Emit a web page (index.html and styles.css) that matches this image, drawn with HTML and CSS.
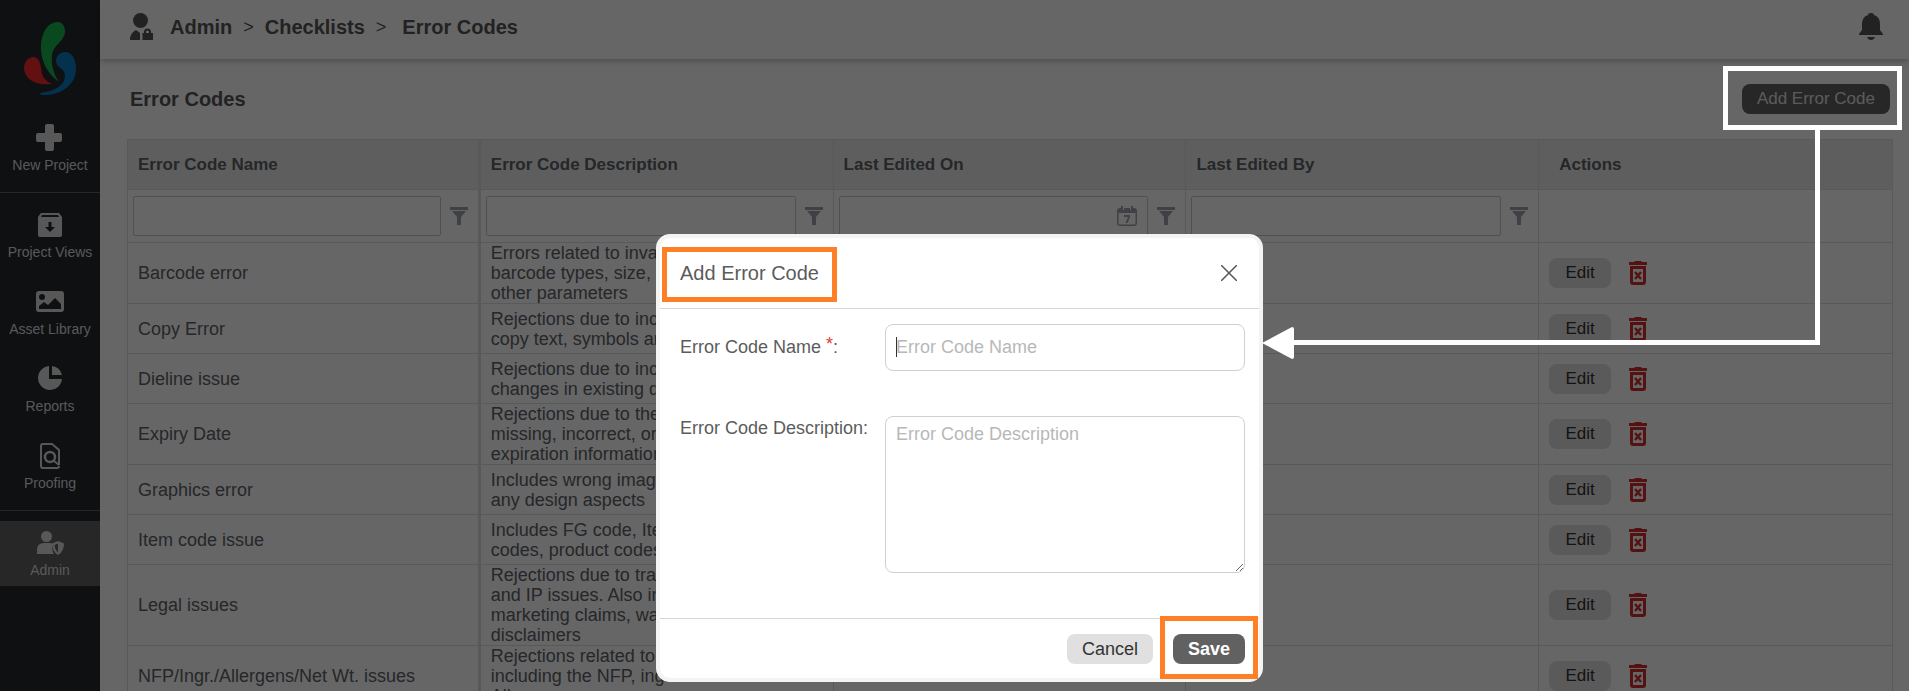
FILE: index.html
```
<!DOCTYPE html>
<html lang="en">
<head>
    <meta charset="UTF-8">
    <title>Error Codes</title>
    <link rel="stylesheet" href="styles.css">
</head>
<body>
<svg class="sprite" aria-hidden="true">
    <symbol id="filter" viewBox="0 0 18 18">
        <path d="M0 0h18v3H0zM2 4h14l-5 6v8H7v-8z"/>
    </symbol>
    <symbol id="trash" viewBox="0 0 18 24">
        <path d="M6 0h6l1 1h5v3H0V1h5zM1 5h16v16a3 3 0 0 1-3 3H4a3 3 0 0 1-3-3zM4 8v13h10V8z" fill-rule="evenodd"/>
        <path d="M6 11l6 7M12 11l-6 7" stroke="currentColor" stroke-width="2.4" fill="none"/>
    </symbol>
</svg>

<div class="page">
    <aside class="sidebar">
        <a class="logo" href="#" aria-label="Home">
            <svg width="52" height="74" viewBox="0 0 52 74">
                <path fill="#19b552" d="M34 0C24 0 17 10 17 26C17 40 24 52 35 60C29 51 27 41 28 34C29 22 41 20 41 9C41 4 38 0 34 0Z"/>
                <path fill="#f5282d" d="M9 35C4 35 0 40 0 46C0 56 10 64 28 62C19 58 18 53 17 46C16 39 14 35 9 35Z"/>
                <path fill="#0a7ac4" d="M41 30C36 30 32 34 32 39C32 46 41 46 41 54C41 62 33 69 16 71L17 73C38 74 52 62 52 47C52 37 48 30 41 30Z"/>
            </svg>
        </a>
        <nav>
            <a class="item" href="#">
                <svg viewBox="0 0 28 28"><path d="M11 1h5a2 2 0 0 1 2 2v7h6a2 2 0 0 1 2 2v5a2 2 0 0 1-2 2h-6v7a2 2 0 0 1-2 2h-5a2 2 0 0 1-2-2v-7H2a2 2 0 0 1-2-2v-5a2 2 0 0 1 2-2h7V3a2 2 0 0 1 2-2z"/></svg>
                New Project
            </a>
            <hr>
            <a class="item" href="#">
                <svg viewBox="0 0 28 28"><path fill-rule="evenodd" d="M5 3h18l3 4v18a2 2 0 0 1-2 2H4a2 2 0 0 1-2-2V7zM6 5L5 7h18l-1-2zM12.500 12v5H9l5 5 5-5h-3.500v-5z"/></svg>
                Project Views
            </a>
            <a class="item" href="#">
                <svg viewBox="0 0 28 28"><path fill-rule="evenodd" d="M3 4h22a3 3 0 0 1 3 3v15a3 3 0 0 1-3 3H3a3 3 0 0 1-3-3V7a3 3 0 0 1 3-3zM6 7a3 3 0 1 0 0 6 3 3 0 0 0 0-6zM3 22h22v-5l-6-6-7 7-4-3-5 4z"/></svg>
                Asset Library
            </a>
            <a class="item" href="#">
                <svg viewBox="0 0 28 28"><path d="M13 2v13h13A12 12 0 1 1 13 2zM16 2a12 12 0 0 1 10 9H16z"/></svg>
                Reports
            </a>
            <a class="item" href="#">
                <svg viewBox="0 0 28 28"><path d="M23 24V9l-7-6H7a2 2 0 0 0-2 2v20a2 2 0 0 0 2 2h14a2 2 0 0 0 2-2M17 19l6 5" fill="none" stroke="currentColor" stroke-width="2"/><circle cx="14" cy="16" r="5" fill="none" stroke="currentColor" stroke-width="2.500"/></svg>
                Proofing
            </a>
            <hr>
            <a class="item active" href="#">
                <svg viewBox="0 0 28 28"><circle cx="10.500" cy="8.500" r="5.500"/><path d="M1 26v-4q0-7 7-7h5q3 0 4 1-2 5 1 10z"/><path fill-rule="evenodd" d="M22 13l6 2.500q0 8-6 11.500-6-3.500-6-11.500zM22 15.500l-3.500 1.500q.5 5 3.500 7.500z"/></svg>
                Admin
            </a>
        </nav>
    </aside>

    <div class="main">
        <header class="topbar">
            <svg class="user-icon" width="24" height="28" viewBox="0 0 24 28">
                <ellipse cx="10.500" cy="7.500" rx="7.500" ry="7.500"/>
                <path d="M0 27q0-7 6-10l4 3v7z"/>
                <path fill-rule="evenodd" d="M12.500 20H14v-1q0-3.500 3.500-3.500T21 19v1h2v7H12.500zM16 20h3v-1q0-1.500-1.500-1.500T16 19z"/>
            </svg>
            <div class="breadcrumb">
                <a href="#">Admin</a><span>&gt;</span><a href="#">Checklists</a><span>&gt;</span><a class="current" href="#">Error Codes</a>
            </div>
            <button class="bell" aria-label="Notifications">
                <svg width="24" height="28" viewBox="0 0 24 28"><path d="M9 2q0-2 3-2t3 2q6 2 6 9v6l3 4v1H0v-1l3-4v-6q0-7 6-9zM8 24h8q-1 3-4 3t-4-3z"/></svg>
            </button>
        </header>

        <div class="title-row">
            <h1>Error Codes</h1>
            <button class="btn dark add">Add Error Code</button>
        </div>

        <table class="grid">
            <thead>
            <tr>
                <th class="locked">Error Code Name</th>
                <th>Error Code Description</th>
                <th>Last Edited On</th>
                <th>Last Edited By</th>
                <th class="actions">Actions</th>
            </tr>
            <tr class="filters">
                <td class="locked"><div class="filter"><input type="text" aria-label="Filter name"><button aria-label="Filter"><svg><use href="#filter"/></svg></button></div></td>
                <td><div class="filter"><input type="text" aria-label="Filter description"><button aria-label="Filter"><svg><use href="#filter"/></svg></button></div></td>
                <td>
                    <div class="filter">
                        <div class="date">
                            <input type="text" aria-label="Filter date">
                            <svg class="calendar" viewBox="0 0 20 20"><path fill-rule="evenodd" d="M3 2h1V0h2v4h1V2h6v2h1V0h2v2h1q3 0 3 3v12q0 3-3 3H3q-3 0-3-3V5q0-3 3-3zM1.500 7v10q0 1.500 1.500 1.500h14q1.500 0 1.500-1.500V7zM7 9h6v2l-2.500 6H8.500l2.500-6H7z"/></svg>
                        </div>
                        <button aria-label="Filter"><svg><use href="#filter"/></svg></button>
                    </div>
                </td>
                <td><div class="filter"><input type="text" aria-label="Filter editor"><button aria-label="Filter"><svg><use href="#filter"/></svg></button></div></td>
                <td></td>
            </tr>
            </thead>
            <tbody>
            <tr>
                <td class="locked">Barcode error</td>
                <td>Errors related to invalid or missing<br>barcode types, size, resolution and<br>other parameters</td>
                <td></td><td></td>
                <td><div class="tools"><button class="btn">Edit</button><button class="delete" aria-label="Delete"><svg><use href="#trash"/></svg></button></div></td>
            </tr>
            <tr>
                <td class="locked">Copy Error</td>
                <td>Rejections due to incorrect<br>copy text, symbols and claims</td>
                <td></td><td></td>
                <td><div class="tools"><button class="btn">Edit</button><button class="delete" aria-label="Delete"><svg><use href="#trash"/></svg></button></div></td>
            </tr>
            <tr>
                <td class="locked">Dieline issue</td>
                <td>Rejections due to incorrect or<br>changes in existing dieline</td>
                <td></td><td></td>
                <td><div class="tools"><button class="btn">Edit</button><button class="delete" aria-label="Delete"><svg><use href="#trash"/></svg></button></div></td>
            </tr>
            <tr>
                <td class="locked">Expiry Date</td>
                <td>Rejections due to the<br>missing, incorrect, or illegible<br>expiration information</td>
                <td></td><td></td>
                <td><div class="tools"><button class="btn">Edit</button><button class="delete" aria-label="Delete"><svg><use href="#trash"/></svg></button></div></td>
            </tr>
            <tr>
                <td class="locked">Graphics error</td>
                <td>Includes wrong images or<br>any design aspects</td>
                <td></td><td></td>
                <td><div class="tools"><button class="btn">Edit</button><button class="delete" aria-label="Delete"><svg><use href="#trash"/></svg></button></div></td>
            </tr>
            <tr>
                <td class="locked">Item code issue</td>
                <td>Includes FG code, Item<br>codes, product codes</td>
                <td></td><td></td>
                <td><div class="tools"><button class="btn">Edit</button><button class="delete" aria-label="Delete"><svg><use href="#trash"/></svg></button></div></td>
            </tr>
            <tr>
                <td class="locked">Legal issues</td>
                <td>Rejections due to trademark<br>and IP issues. Also includes<br>marketing claims, warnings,<br>disclaimers</td>
                <td></td><td></td>
                <td><div class="tools"><button class="btn">Edit</button><button class="delete" aria-label="Delete"><svg><use href="#trash"/></svg></button></div></td>
            </tr>
            <tr>
                <td class="locked">NFP/Ingr./Allergens/Net Wt. issues</td>
                <td>Rejections related to issues<br>including the NFP, ingredients and<br>Allergens</td>
                <td>10 Dec 2020 10:10</td><td>Admin</td>
                <td><div class="tools"><button class="btn">Edit</button><button class="delete" aria-label="Delete"><svg><use href="#trash"/></svg></button></div></td>
            </tr>
            </tbody>
        </table>
    </div>
</div>

<div class="overlay">
    <form class="modal" role="dialog" aria-labelledby="modal-title">
        <div class="modal-head">
            <h2 id="modal-title" class="marked">Add Error Code</h2>
            <button type="button" class="close" aria-label="Close">
                <svg width="16" height="16" viewBox="0 0 16 16"><path d="M0 0l16 16M16 0L0 16"/></svg>
            </button>
        </div>
        <div class="modal-body">
            <label for="name">Error Code Name <sup>*</sup>:</label>
            <div class="field">
                <input id="name" type="text" placeholder="Error Code Name">
                <i class="caret"></i>
            </div>
            <label for="desc">Error Code Description:</label>
            <textarea id="desc" placeholder="Error Code Description"></textarea>
        </div>
        <div class="modal-foot">
            <button type="button" class="btn">Cancel</button>
            <span class="marked"><button type="submit" class="btn dark save">Save</button></span>
        </div>
    </form>
</div>

<!-- callout from the add button to the dialog -->
<div class="callout-box"></div>
<div class="callout-line"></div>
<svg class="callout-head" width="32" height="32" viewBox="0 0 32 32"><path d="M0 16L30 0q2 0 2 2v28q0 2-2 2z"/></svg>
</body>
</html>
```
FILE: styles.css
```
*{
    margin:0;
    padding:0;
    box-sizing:border-box;
}
body{
    height:100vh;
    overflow:hidden;
    position:relative;
    background:#fff;
    color:#5c6268;
    font:18px/20px "Liberation Sans", Arial, sans-serif;
}
button,input,textarea{
    font:inherit;
    color:inherit;
}
button{
    border:0;
    background:none;
    cursor:pointer;
}
a{
    color:inherit;
    text-decoration:none;
}
svg{
    fill:currentColor;
}
.sprite{
    display:none;
}
.page{
    display:flex;
    height:100vh;
    overflow:hidden;
}

/* sidebar */
.sidebar{
    flex:0 0 100px;
    background:#24292e;
    color:#ddd;
}
.logo{
    display:flex;
    justify-content:center;
    height:116px;
    padding:22px 0 0;
}
.item{
    display:flex;
    flex-direction:column;
    align-items:center;
    gap:4px;
    padding:7px 0 6px;
    font-size:14px;
}
.item + .item{
    margin-top:12px;
}
.item svg{
    width:28px;
    height:28px;
}
.item.active{
    background:#626262;
}
.sidebar hr{
    border:0;
    border-top:1px solid #626262;
    margin:11px 0 10px;
}

/* top bar */
.main{
    flex:1;
    min-width:0;
}
.topbar{
    display:flex;
    align-items:center;
    height:59px;
    padding:0 26px 5px 30px;
    color:#565656;
    box-shadow:0 2px 6px rgba(0,0,0,.25);
}
.breadcrumb{
    display:flex;
    flex:1;
    margin-left:16px;
    font-size:20px;
    font-weight:bold;
}
.breadcrumb span{
    margin:0 11px;
    font-size:18px;
    font-weight:normal;
}
.breadcrumb .current{
    margin-left:5px;
}
.bell{
    height:28px;
}
.title-row{
    display:flex;
    align-items:center;
    justify-content:space-between;
    height:80px;
    padding:0 19px 0 30px;
}
h1{
    font-size:20px;
    color:#565656;
}
.btn{
    height:30px;
    padding:0 15px;
    border-radius:8px;
    background:#e0e0e0;
    color:#333;
}
.btn.dark{
    background:#616161;
    color:#fff;
}
.btn.add{
    font-size:17px;
    color:#e4e4e4;
}

/* grid */
.grid{
    width:calc(100% - 43px);
    margin-left:27px;
    table-layout:fixed;
    border-collapse:separate;
    border-spacing:0;
    border:1px solid #dedede;
}
.grid th,
.grid td{
    height:50px;
    padding:0 10px;
    text-align:left;
    border-right:1px solid #dedede;
    border-bottom:1px solid #dedede;
}
.grid th:last-child,
.grid td:last-child{
    border-right:0;
}
.grid .locked{
    border-right-width:3px;
}
.grid th{
    background:#ececec;
    font-size:17px;
}
.grid th.actions{
    padding-left:20px;
}
.grid .filters td{
    height:53px;
    padding:0 1px 0 5px;
}
.filter{
    display:flex;
    align-items:center;
}
.filter input{
    flex:1;
    min-width:0;
    width:100%;
    height:40px;
    padding:0 8px;
    border:1px solid #c8c8c8;
    border-radius:2px;
    background:#fff;
}
.filter button{
    flex:0 0 36px;
    height:18px;
    color:#a0a4ac;
}
.filter button svg{
    width:18px;
    height:18px;
}
.date{
    flex:1;
    position:relative;
}
.date input{
    display:block;
}
.calendar{
    position:absolute;
    top:10px;
    right:11px;
    width:20px;
    height:20px;
    color:#a0a4ac;
}
.tools{
    display:flex;
    align-items:center;
    gap:18px;
}
.tools .btn{
    width:62px;
    font-size:17px;
}
.delete{
    height:24px;
    color:#d32f2f;
}
.delete svg{
    width:18px;
    height:24px;
}

/* dialog */
.overlay{
    position:absolute;
    inset:0;
    display:flex;
    align-items:flex-start;
    justify-content:center;
    padding:234px 0 0 10px;
    background:rgba(0,0,0,.6);
}
.modal{
    width:607px;
    border:4px solid #f4f4f4;
    border-radius:14px;
    background:#fff;
    color:#5c5c5c;
}
.modal-head{
    display:flex;
    align-items:center;
    justify-content:space-between;
    height:71px;
    padding:0 18px 0 20px;
    border-bottom:1px solid #d6d6d6;
}
h2{
    font-size:20px;
    font-weight:normal;
}
.close{
    width:24px;
    height:24px;
}
.close svg{
    display:block;
    margin:4px;
    stroke:#555;
    stroke-width:1.5;
}
.modal-body{
    display:grid;
    grid-template-columns:auto 360px;
    justify-content:space-between;
    gap:45px 0;
    padding:15px 14px 45px 20px;
}
.modal-body label{
    padding-top:13px;
}
.modal-body label[for="desc"]{
    padding-top:2px;
}
sup{
    color:#e53935;
    font-size:18px;
    line-height:0;
    vertical-align:3px;
}
.field{
    position:relative;
}
.field input,
.modal-body textarea{
    display:block;
    width:100%;
    border:1px solid #d0d0d0;
    border-radius:8px;
    outline:0;
}
.field input{
    height:47px;
    padding:0 10px;
}
.modal-body textarea{
    height:157px;
    padding:7px 10px;
}
::placeholder{
    color:#b8b8b8;
}
.caret{
    position:absolute;
    top:13px;
    left:11px;
    width:1px;
    height:20px;
    background:#333;
}
.modal-foot{
    display:flex;
    align-items:center;
    justify-content:flex-end;
    gap:20px;
    height:60px;
    padding:0 14px 0 0;
    border-top:1px solid #d6d6d6;
}
.btn.save{
    font-weight:bold;
}

/* callouts */
.marked{
    position:relative;
}
.marked::after{
    content:"";
    position:absolute;
    inset:-16px -18px -19px;
    border:5px solid #ff7f27;
    pointer-events:none;
}
.modal-foot .marked{
    display:flex;
}
.modal-foot .marked::after{
    inset:-18px -13px -15px;
}
.callout-box{
    position:absolute;
    top:66px;
    right:7px;
    width:179px;
    height:64px;
    border:5px solid #fff;
}
.callout-line{
    position:absolute;
    top:130px;
    right:89px;
    left:calc(50% + 339px);
    height:215px;
    border:solid #fff;
    border-width:0 5px 5px 0;
}
.callout-head{
    position:absolute;
    top:327px;
    left:calc(50% + 307px);
    color:#fff;
}
```
